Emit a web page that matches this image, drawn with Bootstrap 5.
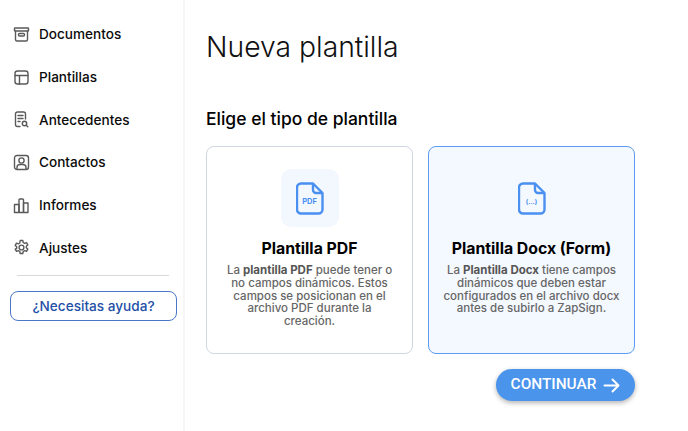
<!DOCTYPE html>
<html lang="es">
<head>
    <meta charset="UTF-8">
    <meta name="viewport" content="width=device-width, initial-scale=1.0">
    <title>Nueva plantilla</title>
    <link href="https://cdn.jsdelivr.net/npm/bootstrap@5.3.0/dist/css/bootstrap.min.css" rel="stylesheet">
    <style>
        html, body { height: 431px; overflow: hidden; }
        body { font-family: "Inter", "Open Sans", sans-serif; background: #fff; color: #000; }
        .side-bar { width: 185px; height: 431px; border-right: 2px solid #f6f6f7; padding: 13px 7px 0 10px; }
        .side-item { height: 42.7px; padding-left: 3px; gap: 9px; color: #0b0b0b; font-size: 13.6px; font-weight: 500; text-decoration: none; }
        .side-item svg { width: 17px; height: 17px; flex: none; stroke: #5a5a5a; fill: none; stroke-width: 1.4; stroke-linecap: round; stroke-linejoin: round; }
        .side-rule { margin: 6px 7px 15px 7px; border-top: 1px solid #d9d9d9; opacity: 1; }
        .help-btn { height: 30px; width: 167px; padding: 0; border: 1.4px solid #4a78c8; border-radius: 8px; color: #2450a8; font-size: 13.6px; font-weight: 500; background: #fff; }
        .main-area { padding: 30px 0 0 21px; width: 450px; }
        .page-title { font-size: 28.3px; font-weight: 300; line-height: 34px; margin: 0; color: #111; }
        .sub-title { font-size: 17.5px; font-weight: 500; line-height: 24px; margin: 43px 0 15px; }
        .type-card { width: 207px; height: 208px; border: 1px solid #cfd6e2; border-radius: 8px; padding: 22px 13.5px 0; background: #fff; }
        .type-card.active { border-color: #5b9bf3; background: #f4f8ff; }
        .doc-box { width: 58px; height: 58px; border-radius: 10px; }
        .type-card:not(.active) .doc-box { background: #f3f7fe; }
        .doc-box svg { width: 28px; height: 33px; }
        .type-name { font-size: 15.8px; font-weight: 700; line-height: 20px; margin: 12px 0 5px; white-space: nowrap; }
        .type-text { font-size: 11.5px; line-height: 12.8px; color: #666; margin: 0; font-weight: 500; }
        .type-text strong { display: inline-block; font-weight: 700; color: #555; }
        .next-btn { height: 32px; width: 139px; margin-top: 15px; border: 0; border-radius: 16px; background: #4a94ec; color: #fff; font-family: "Roboto", sans-serif; font-size: 15.4px; font-weight: 500; box-shadow: 0 2px 5px rgba(0,0,0,.3); padding: 0; gap: 7px; }
    </style>
</head>
<body class="d-flex">
    <div class="side-bar flex-shrink-0">
        <a href="#" class="side-item d-flex align-items-center">
            <svg viewBox="0 0 17 17"><rect x="1.5" y="2" width="14" height="3" rx=".5"/><path d="M2.5 5v8.5a1.5 1.5 0 0 0 1.5 1.5h9a1.5 1.5 0 0 0 1.5-1.5V5"/><rect x="5.5" y="7.5" width="6" height="2.5" rx="1"/></svg>
            <span>Documentos</span>
        </a>
        <a href="#" class="side-item d-flex align-items-center">
            <svg viewBox="0 0 17 17"><rect x="2" y="2" width="13" height="13" rx="2.5"/><path d="M2 6.5h13M6.5 6.5V15"/></svg>
            <span>Plantillas</span>
        </a>
        <a href="#" class="side-item d-flex align-items-center">
            <svg viewBox="0 0 17 17"><path d="M7 15.5H4.5a2 2 0 0 1-2-2V3a2 2 0 0 1 2-2h6a2 2 0 0 1 2 2v5"/><path d="M5 4.5h5M5 7.5h5M5 10.5h2"/><circle cx="11.5" cy="12.5" r="2.2"/><path d="M13.2 14.2l1.6 1.6"/></svg>
            <span>Antecedentes</span>
        </a>
        <a href="#" class="side-item d-flex align-items-center">
            <svg viewBox="0 0 17 17"><rect x="1.5" y="1.5" width="14" height="14" rx="2.5"/><circle cx="8.5" cy="6.5" r="2.6"/><path d="M4 15v-1.5a3 3 0 0 1 3-3h3a3 3 0 0 1 3 3V15"/></svg>
            <span>Contactos</span>
        </a>
        <a href="#" class="side-item d-flex align-items-center">
            <svg viewBox="0 0 17 17"><rect x="1.5" y="7.5" width="4.5" height="8"/><rect x="6" y="2" width="4.5" height="13.5" rx=".8"/><rect x="10.5" y="6" width="4.5" height="9.5"/></svg>
            <span>Informes</span>
        </a>
        <a href="#" class="side-item d-flex align-items-center">
            <svg viewBox="0 0 17 17"><circle cx="8.5" cy="8.5" r="2.4"/><path d="M7.2 1.5h2.6l.4 2 1.4.8 1.9-.7 1.3 2.3-1.5 1.3v1.6l1.5 1.3-1.3 2.3-1.9-.7-1.4.8-.4 2H7.2l-.4-2-1.4-.8-1.9.7-1.3-2.3L3.7 9.3V7.7L2.2 6.4l1.3-2.3 1.9.7 1.4-.8z"/></svg>
            <span>Ajustes</span>
        </a>
        <hr class="side-rule">
        <button type="button" class="btn help-btn">¿Necesitas ayuda?</button>
    </div>

    <div class="main-area">
        <h1 class="page-title">Nueva plantilla</h1>
        <h2 class="sub-title">Elige el tipo de plantilla</h2>
        <div class="d-flex">
            <div class="type-card text-center">
                <div class="doc-box d-flex align-items-center justify-content-center mx-auto">
                    <svg viewBox="0 0 28 33" fill="none" stroke="#4a90f0" stroke-width="2.4" stroke-linejoin="round">
                        <path d="M5 1.5h12l9.5 9.500v16.500a4 4 0 0 1-4 4H5a4 4 0 0 1-4-4V5.500a4 4 0 0 1 4-4z"/>
                        <path d="M17 1.5V8a3 3 0 0 0 3 3h6.500"/>
                        <text x="13.5" y="21.5" text-anchor="middle" font-size="7.5" font-weight="700" fill="#4a90f0" stroke="none">PDF</text>
                    </svg>
                </div>
                <div class="type-name">Plantilla PDF</div>
                <p class="type-text">La <strong>plantilla PDF</strong> puede tener o no campos dinámicos. Estos campos se posicionan en el archivo PDF durante la creación.</p>
            </div>
            <div class="type-card active text-center ms-auto">
                <div class="doc-box d-flex align-items-center justify-content-center mx-auto">
                    <svg viewBox="0 0 28 33" fill="none" stroke="#4a90f0" stroke-width="2.4" stroke-linejoin="round">
                        <path d="M5 1.5h12l9.5 9.500v16.500a4 4 0 0 1-4 4H5a4 4 0 0 1-4-4V5.500a4 4 0 0 1 4-4z"/>
                        <path d="M17 1.5V8a3 3 0 0 0 3 3h6.500"/>
                        <text x="13.5" y="21.5" text-anchor="middle" font-size="6.5" font-weight="700" fill="#4a90f0" stroke="none">(...)</text>
                    </svg>
                </div>
                <div class="type-name">Plantilla Docx (Form)</div>
                <p class="type-text">La <strong>Plantilla Docx</strong> tiene campos dinámicos que deben estar configurados en el archivo docx antes de subirlo a ZapSign.</p>
            </div>
        </div>
        <div class="d-flex justify-content-end">
            <button type="button" class="btn next-btn d-flex align-items-center justify-content-center">
                CONTINUAR
                <svg width="17" height="15" viewBox="0 0 17 15" fill="none" stroke="#fff" stroke-width="2" stroke-linecap="round" stroke-linejoin="round"><path d="M1.5 7.5h14M9.5 1.5l6 6-6 6"/></svg>
            </button>
        </div>
    </div>
</body>
</html>
